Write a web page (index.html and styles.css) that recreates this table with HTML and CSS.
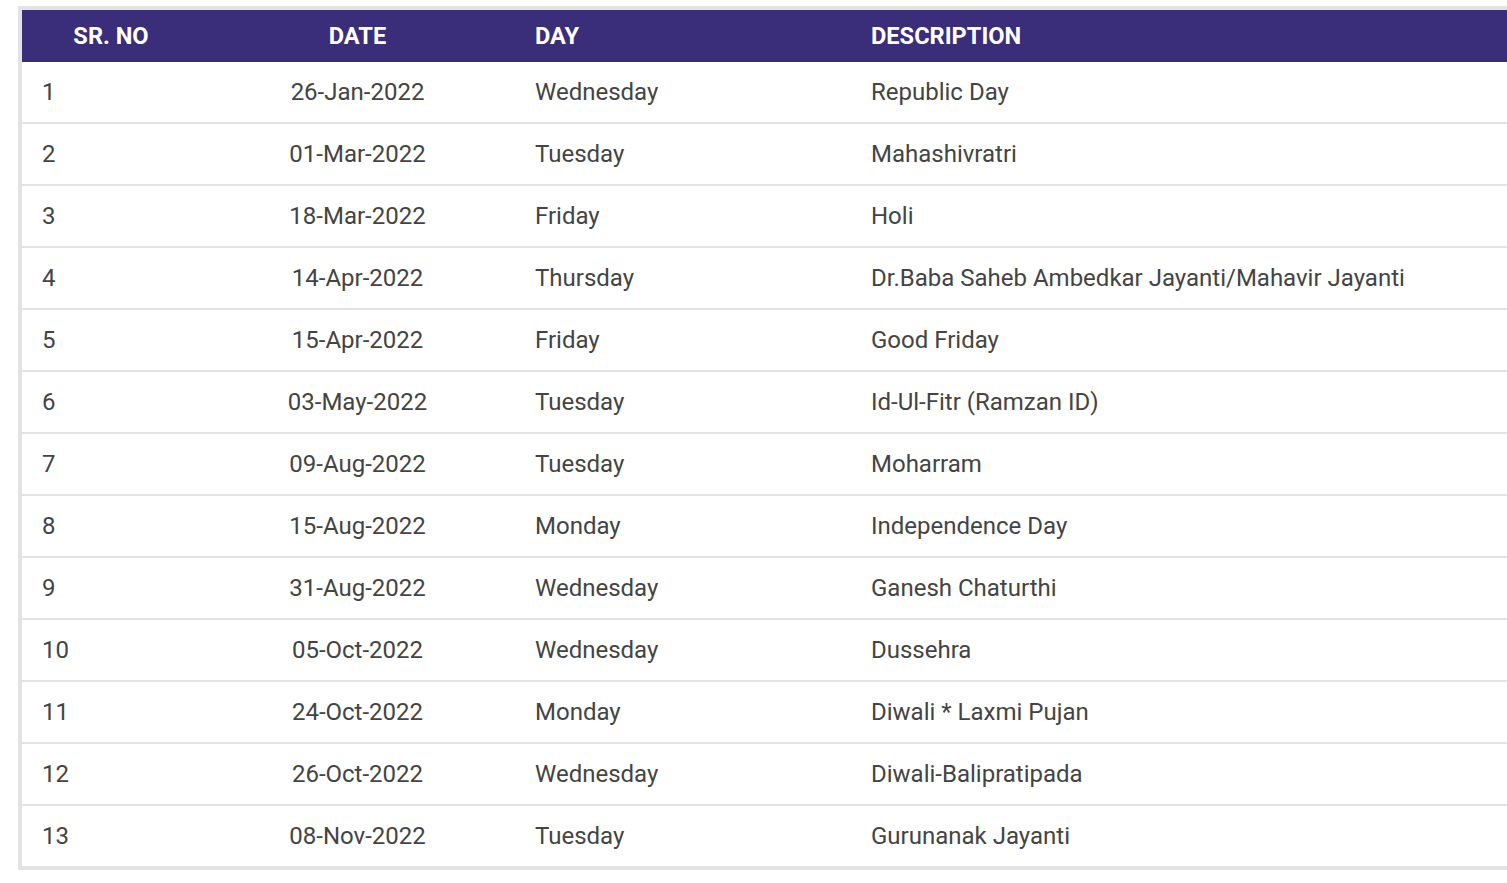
FILE: index.html
```html
<!DOCTYPE html>
<html>
<head>
<meta charset="utf-8">
<link rel="stylesheet" href="styles.css">
</head>
<body>
<div class="wrap">
<table class="holidays">
<colgroup><col class="c1"><col class="c2"><col class="c3"><col class="c4"></colgroup>
<thead>
<tr><th class="center">SR. NO</th><th class="center">DATE</th><th>DAY</th><th>DESCRIPTION</th></tr>
</thead>
<tbody>
<tr><td>1</td><td class="center">26-Jan-2022</td><td>Wednesday</td><td>Republic Day</td></tr>
<tr><td>2</td><td class="center">01-Mar-2022</td><td>Tuesday</td><td>Mahashivratri</td></tr>
<tr><td>3</td><td class="center">18-Mar-2022</td><td>Friday</td><td>Holi</td></tr>
<tr><td>4</td><td class="center">14-Apr-2022</td><td>Thursday</td><td>Dr.Baba Saheb Ambedkar Jayanti/Mahavir Jayanti</td></tr>
<tr><td>5</td><td class="center">15-Apr-2022</td><td>Friday</td><td>Good Friday</td></tr>
<tr><td>6</td><td class="center">03-May-2022</td><td>Tuesday</td><td>Id-Ul-Fitr (Ramzan ID)</td></tr>
<tr><td>7</td><td class="center">09-Aug-2022</td><td>Tuesday</td><td>Moharram</td></tr>
<tr><td>8</td><td class="center">15-Aug-2022</td><td>Monday</td><td>Independence Day</td></tr>
<tr><td>9</td><td class="center">31-Aug-2022</td><td>Wednesday</td><td>Ganesh Chaturthi</td></tr>
<tr><td>10</td><td class="center">05-Oct-2022</td><td>Wednesday</td><td>Dussehra</td></tr>
<tr><td>11</td><td class="center">24-Oct-2022</td><td>Monday</td><td>Diwali * Laxmi Pujan</td></tr>
<tr><td>12</td><td class="center">26-Oct-2022</td><td>Wednesday</td><td>Diwali-Balipratipada</td></tr>
<tr><td>13</td><td class="center">08-Nov-2022</td><td>Tuesday</td><td>Gurunanak Jayanti</td></tr>
</tbody>
</table>
</div>
</body>
</html>
```
FILE: styles.css
```css
html, body {
  margin: 0;
  padding: 0;
  background: #ffffff;
}
body {
  padding: 6px 0 0 18px;
  font-family: Roboto, "Liberation Sans", sans-serif;
}
.wrap {
  border: 4px solid #e3e3e3;
  border-right: none;
}
.holidays {
  width: 100%;
  border-collapse: collapse;
  table-layout: fixed;
}
.c1 { width: 178px; }
.c2 { width: 315px; }
.c3 { width: 336px; }
.holidays th {
  background: #3a2d7a;
  color: #ffffff;
  font-weight: 700;
  font-size: 23.6px;
  height: 52px;
  padding: 0 20px;
  text-align: left;
  box-sizing: border-box;
}
.holidays th.center { text-align: center; padding: 0; }
.holidays td {
  height: 60px;
  padding: 0 20px;
  font-size: 24px;
  color: #444444;
  text-align: left;
  border-bottom: 2px solid #e3e3e3;
  white-space: nowrap;
}
.holidays tbody tr:last-child td { border-bottom: none; }
.holidays td.center { text-align: center; padding: 0; }
```
